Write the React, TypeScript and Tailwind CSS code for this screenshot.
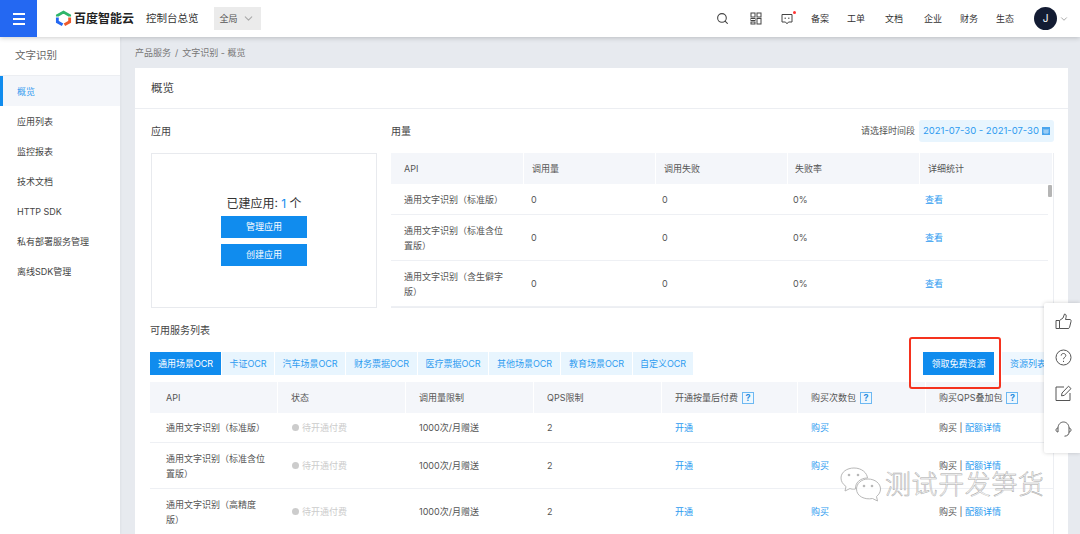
import { ChevronDown, Search } from 'lucide-react';

const sideItems = ['概览', '应用列表', '监控报表', '技术文档', 'HTTP SDK', '私有部署服务管理', '离线SDK管理'];
const navItems = [
    { label: '备案', cls: 'ml-[18px]' },
    { label: '工单', cls: 'ml-[18px]' },
    { label: '文档', cls: 'ml-[20px]' },
    { label: '企业', cls: 'ml-[21px]' },
    { label: '财务', cls: 'ml-[18px]' },
    { label: '生态', cls: 'ml-[18px]' },
];

const tabs = [
    { label: '通用场景OCR', cls: 'w-[71px] bg-[#108cee] text-white' },
    { label: '卡证OCR', cls: 'w-[52px] bg-[#e8f5fe] text-[#2d9bf0]' },
    { label: '汽车场景OCR', cls: 'w-[70px] bg-[#e8f5fe] text-[#2d9bf0]' },
    { label: '财务票据OCR', cls: 'w-[71px] bg-[#e8f5fe] text-[#2d9bf0]' },
    { label: '医疗票据OCR', cls: 'w-[70px] bg-[#e8f5fe] text-[#2d9bf0]' },
    { label: '其他场景OCR', cls: 'w-[71px] bg-[#e8f5fe] text-[#2d9bf0]' },
    { label: '教育场景OCR', cls: 'w-[71px] bg-[#e8f5fe] text-[#2d9bf0]' },
    { label: '自定义OCR', cls: 'w-[60px] bg-[#e8f5fe] text-[#2d9bf0]' },
];

const usageRows = [
    { name: '通用文字识别（标准版）', h: 'h-[31px]' },
    { name: '通用文字识别（标准含位置版）', h: 'h-[46px]' },
    { name: '通用文字识别（含生僻字版）', h: 'h-[46px]' },
];

const serviceRows = [
    { name: '通用文字识别（标准版）', h: 'h-[30px]' },
    { name: '通用文字识别（标准含位置版）', h: 'h-[46px]' },
    { name: '通用文字识别（高精度版）', h: 'h-[46px]' },
];

const usageCols = 'grid grid-cols-[132px_132px_132px_132px_129px]';
const serviceCols = 'grid grid-cols-[128px_128px_128px_128px_136px_128px_128px]';

const HelpBadge = () => (
    <span className="ml-[4px] inline-flex h-[12px] w-[12px] items-center justify-center border border-[#6db8f2] bg-[#eef7fe] text-[9px] font-bold leading-none text-[#2d8fe0]">?</span>
);

const HeadCell = ({ children, pl }: { children: React.ReactNode; pl: string }) => (
    <div className={`flex items-center border-r border-white ${pl}`}>{children}</div>
);

const App = () => {
    return (
        <div className="relative flex h-[534px] w-[1080px] flex-col overflow-hidden bg-[#e7eaef] font-['Inter','Noto_Sans_CJK_SC',sans-serif] text-[9px] text-[#555]">
            {/* top bar */}
            <header className="relative z-10 flex h-[37px] shrink-0 items-center bg-white shadow-[0_1px_5px_rgba(0,0,0,0.2)]">
                <button className="flex h-[37px] w-[37px] flex-col items-center justify-center gap-[3px] bg-[#2468f2]">
                    <span className="h-[2px] w-[12px] bg-white" />
                    <span className="h-[2px] w-[12px] bg-white" />
                    <span className="h-[2px] w-[12px] bg-white" />
                </button>
                <svg className="ml-[18px]" width="17" height="17" viewBox="0 0 18 18" fill="none" strokeWidth="3">
                    <path d="M2.5 7 V5.8 L9 2.2 L15.5 5.8 V7" stroke="#2fb56a" />
                    <path d="M2.5 8 V12.5 L8 15.6" stroke="#2468f2" />
                    <path d="M15.5 8 V12.5 L10 15.6" stroke="#ee5a2d" />
                </svg>
                <span className="ml-[2px] w-[60px] text-[12px] font-bold leading-none text-[#222]">百度智能云</span>
                <span className="ml-[12px] text-[10.5px] text-[#333]">控制台总览</span>
                <div className="ml-[15px] flex h-[23px] w-[47px] items-center justify-between bg-[#ebebeb] pl-[6px] pr-[6px] text-[#555]">
                    <span>全局</span>
                    <ChevronDown size={13} className="text-[#aaa]" />
                </div>
                <div className="ml-auto flex items-center pr-[11px]">
                    <Search size={13} className="text-[#444]" />
                    <svg className="ml-[21px]" width="12" height="13" viewBox="0 0 12 13" fill="none" stroke="#444" strokeWidth="1">
                        <rect x="1" y="1" width="4" height="4" />
                        <rect x="7" y="1" width="4" height="4" />
                        <rect x="1" y="6.5" width="4" height="2" />
                        <rect x="1" y="10" width="4" height="2" />
                        <rect x="7" y="6.5" width="4" height="5.5" />
                    </svg>
                    <div className="relative ml-[19px]">
                        <svg width="12" height="12" viewBox="0 0 12 12" fill="none" stroke="#444" strokeWidth="1" className="block">
                            <path d="M1 1.5 H11 V9 H7.5 L6 10.8 L4.5 9 H1 Z" />
                            <path d="M3.5 5.2 H5 M7 5.2 H8.5" />
                        </svg>
                        <span className="absolute right-[-3px] top-[-2px] h-[3px] w-[3px] rounded-full bg-[#f33]" />
                    </div>
                    <div className="flex text-[#333]">
                        {navItems.map(item => (
                            <span key={item.label} className={`w-[18px] ${item.cls}`}>{item.label}</span>
                        ))}
                    </div>
                    <div className="ml-[20px] flex h-[23px] w-[23px] items-center justify-center rounded-full bg-[#131c33] text-[10px] text-white">J</div>
                    <ChevronDown size={10} className="ml-[2px] text-[#999]" />
                </div>
            </header>

            <div className="flex min-h-0 flex-1">
                {/* sidebar */}
                <aside className="w-[120px] shrink-0 bg-white shadow-[1px_0_2px_rgba(0,0,0,0.04)]">
                    <div className="flex h-[39px] items-center border-b border-[#eceef2] pl-[15px] text-[10.5px] text-[#666]">文字识别</div>
                    {sideItems.map((item, idx) => (
                        <div
                            key={item}
                            className={idx === 0
                                ? 'flex h-[30px] items-center border-l-[3px] border-[#108cee] bg-[#f4f6fa] pl-[14px] pt-[1px] text-[#3a9df0]'
                                : 'flex h-[30px] items-center pl-[17px] pt-[1px] text-[#444]'}
                        >
                            {item}
                        </div>
                    ))}
                </aside>

                {/* main */}
                <main className="min-w-0 flex-1 pl-[15px] pr-[12px]">
                    <div className="flex h-[31px] items-center gap-[4px] text-[#777]">
                        <span>产品服务</span>
                        <span>/</span>
                        <span>文字识别 - 概览</span>
                    </div>
                    <section className="bg-white">
                        <div className="flex h-[41px] items-center border-b border-[#eceef2] pl-[16px] pt-[1px] text-[11.5px] text-[#444]">概览</div>
                        <div className="pl-[15px] pr-[14px]">
                            <div className="flex">
                                <div className="w-[241px] shrink-0 pl-[1px]">
                                    <div className="flex h-[44px] items-center text-[10px] text-[#444]">应用</div>
                                    <div className="flex h-[155px] w-[226px] flex-col items-center border border-[#e8eaee] pt-[41px]">
                                        <div className="h-[21px] text-[12px] leading-[18px] text-[#333]">已建应用: <span className="text-[#108cee]">1</span> 个</div>
                                        <button className="h-[22px] w-[86px] bg-[#108cee] text-white">管理应用</button>
                                        <button className="mt-[6px] h-[22px] w-[86px] bg-[#108cee] text-white">创建应用</button>
                                    </div>
                                </div>
                                <div className="min-w-0 flex-1">
                                    <div className="flex h-[44px] items-center justify-between">
                                        <span className="text-[10px] text-[#444]">用量</span>
                                        <div className="flex items-center gap-[4px]">
                                            <span className="text-[#555]">请选择时间段</span>
                                            <div className="flex h-[22px] w-[135px] items-center justify-center gap-[3px] rounded-[3px] bg-[#e8f5fe] text-[9.5px] text-[#2d9bf0]">
                                                <span>2021-07-30 - 2021-07-30</span>
                                                <svg width="8" height="8" viewBox="0 0 8 8"><rect width="8" height="8" fill="#4aa5ee" /><path d="M1 3 H7 M1 5 H7 M3 3 V7 M5 3 V7" stroke="#e8f5fe" strokeWidth="0.6" /></svg>
                                            </div>
                                        </div>
                                    </div>
                                    <div className="relative h-[155px] border-b border-r border-[#eceef2]">
                                        <div className="grid h-[31px] grid-cols-[133px_132px_132px_132px_133px] bg-[#f4f6fa] text-[#555]">
                                            <HeadCell pl="pl-[13px]">API</HeadCell>
                                            <HeadCell pl="pl-[8px]">调用量</HeadCell>
                                            <HeadCell pl="pl-[8px]">调用失败</HeadCell>
                                            <HeadCell pl="pl-[7px]">失败率</HeadCell>
                                            <HeadCell pl="pl-[8px]">详细统计</HeadCell>
                                        </div>
                                        {usageRows.map(row => (
                                            <div key={row.name} className={`${usageCols} ${row.h} w-[657px] border-b border-[#eef0f4] pt-[1px] text-[#555]`}>
                                                <div className="flex items-center pl-[13px] pr-[14px] leading-[15px]">{row.name}</div>
                                                <div className="flex items-center pl-[8px]">0</div>
                                                <div className="flex items-center pl-[7px]">0</div>
                                                <div className="flex items-center pl-[6px]">0%</div>
                                                <div className="flex items-center pl-[6px] text-[#2d9bf0]">查看</div>
                                            </div>
                                        ))}
                                        <span className="absolute right-[1px] top-[32px] h-[12px] w-[4px] rounded-[1px] bg-[#b5b5b5]" />
                                    </div>
                                </div>
                            </div>

                            <div className="flex h-[44px] items-center text-[10px] text-[#444]">可用服务列表</div>

                            <div className="flex h-[23px] items-stretch">
                                <div className="flex gap-[1px]">
                                    {tabs.map(tab => (
                                        <div key={tab.label} className={`flex items-center justify-center ${tab.cls}`}>{tab.label}</div>
                                    ))}
                                </div>
                                <div className="relative ml-[230px] flex w-[71px] items-center justify-center bg-[#108cee] text-white">
                                    领取免费资源
                                    <span className="absolute bottom-[-14px] left-[-14px] right-[-7px] top-[-15px] rounded-[3px] border-2 border-[#f5321e]" />
                                </div>
                                <div className="ml-[8px] flex flex-1 items-center bg-[#eef7fe] pl-[8px] text-[#2d9bf0]">资源列表</div>
                            </div>

                            <div className="mt-[7px] border-r border-[#eceef2]">
                                <div className={`${serviceCols} h-[31px] bg-[#f4f6fa] text-[#555]`}>
                                    <HeadCell pl="pl-[16px]">API</HeadCell>
                                    <HeadCell pl="pl-[13px]">状态</HeadCell>
                                    <HeadCell pl="pl-[13px]">调用量限制</HeadCell>
                                    <HeadCell pl="pl-[13px]">QPS限制</HeadCell>
                                    <HeadCell pl="pl-[13px]">开通按量后付费<HelpBadge /></HeadCell>
                                    <HeadCell pl="pl-[13px]">购买次数包<HelpBadge /></HeadCell>
                                    <HeadCell pl="pl-[13px]">购买QPS叠加包<HelpBadge /></HeadCell>
                                </div>
                                {serviceRows.map(row => (
                                    <div key={row.name} className={`${serviceCols} ${row.h} border-b border-[#eef0f4] text-[#555]`}>
                                        <div className="flex items-center pl-[16px] pr-[12px] leading-[15px]">{row.name}</div>
                                        <div className="flex items-center pl-[14px] text-[#ccc]">
                                            <span className="mr-[3px] h-[7px] w-[7px] rounded-full bg-[#ccc]" />
                                            待开通付费
                                        </div>
                                        <div className="flex items-center pl-[13px]">1000次/月赠送</div>
                                        <div className="flex items-center pl-[13px]">2</div>
                                        <div className="flex items-center pl-[13px] text-[#2d9bf0]">开通</div>
                                        <div className="flex items-center pl-[13px] text-[#2d9bf0]">购买</div>
                                        <div className="flex items-center pl-[13px]">购买&nbsp;|&nbsp;<span className="text-[#2d9bf0]">配额详情</span></div>
                                    </div>
                                ))}
                            </div>
                        </div>
                    </section>
                </main>
            </div>

            {/* floating tools */}
            <div className="absolute right-0 top-[303px] z-20 flex h-[150px] w-[36px] flex-col items-center gap-[19px] rounded-l-[2px] bg-white pl-[2px] pt-[10px] shadow-[0_0_4px_rgba(0,0,0,0.18)]">
                <svg width="17" height="17" viewBox="0 0 17 17" fill="none" stroke="#555" strokeWidth="1">
                    <path d="M1 7.5 H4.5 V15.5 H1 Z" />
                    <path d="M4.5 7.5 L8 5 L9.5 1 C11 1 11.5 2.5 11 4.5 L10.5 6.5 H15 C16 6.5 16.2 7.5 16 8.5 L14.5 14.5 C14.3 15.2 13.8 15.5 13 15.5 H4.5" />
                </svg>
                <svg width="17" height="17" viewBox="0 0 17 17" fill="none" stroke="#555" strokeWidth="1">
                    <circle cx="8.5" cy="8.5" r="7.5" />
                    <path d="M6.2 6.6 C6.2 5.2 7.3 4.5 8.5 4.5 C9.8 4.5 10.8 5.4 10.8 6.5 C10.8 8.2 8.5 8.3 8.5 10.2" />
                    <path d="M8.5 11.8 V13" />
                </svg>
                <svg width="17" height="17" viewBox="0 0 17 17" fill="none" stroke="#555" strokeWidth="1">
                    <path d="M9 2 H1 V15.5 H15 V8" />
                    <path d="M6.5 10.8 L7 8 L13.5 1.2 L16 3.6 L9.3 10.4 Z" />
                </svg>
                <svg width="17" height="17" viewBox="0 0 17 17" fill="none" stroke="#555" strokeWidth="1">
                    <path d="M3 7 C3 3.5 5.5 1 8.5 1 C11.5 1 14 3.5 14 7" />
                    <path d="M3 7 C1.8 7 1 8 1 9 C1 10 1.8 11 3 11 Z" />
                    <path d="M14 7 C15.2 7 16 8 16 9 C16 10 15.2 11 14 11 Z" />
                    <path d="M14 11 C14 13.5 12.5 15 9.5 15.2" />
                </svg>
            </div>

            {/* watermark */}
            <div className="pointer-events-none absolute left-[840px] top-[467px] z-30 flex items-center">
                <svg width="42" height="36" viewBox="0 0 42 36" fill="rgba(255,255,255,0.7)" stroke="#b8b8b8" strokeWidth="1">
                    <path d="M14 1 C22 1 27 6 27.5 11 C20 11 15 16 15.5 22 C13 22.5 11 22 10 21.5 L5 24 L6 19.5 C2.5 17 1 14 1 11 C1 5 7 1 14 1 Z" />
                    <path d="M28 12 C35 12 40.5 16.5 40.5 22 C40.5 25 39 27.5 36.5 29.5 L37.5 34 L32.5 31.5 C25 33 16.5 29.5 16.5 22 C16.5 16.5 21.5 12 28 12 Z" />
                    <circle cx="9" cy="8" r="1.3" fill="#b8b8b8" stroke="none" />
                    <circle cx="18" cy="8" r="1.3" fill="#b8b8b8" stroke="none" />
                    <circle cx="24" cy="19" r="1.3" fill="#b8b8b8" stroke="none" />
                    <circle cx="32" cy="19" r="1.3" fill="#b8b8b8" stroke="none" />
                </svg>
                <span className="ml-[3px] whitespace-nowrap text-[26px] font-light leading-none tracking-[0.6px] text-white/70 [-webkit-text-stroke:0.5px_#a8a8a8]">测试开发笋货</span>
            </div>
        </div>
    );
};

export default App;
